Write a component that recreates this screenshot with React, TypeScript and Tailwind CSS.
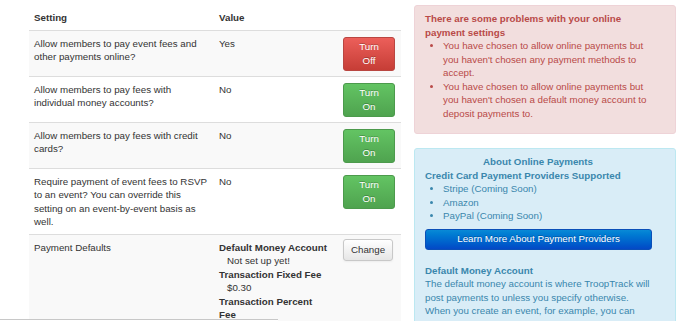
import type { ReactNode } from 'react'

interface SettingRow {
  label: string
  value: string
  on: boolean
}

const settingRows: SettingRow[] = [
  { label: 'Allow members to pay event fees and other payments online?', value: 'Yes', on: true },
  { label: 'Allow members to pay fees with individual money accounts?', value: 'No', on: false },
  { label: 'Allow members to pay fees with credit cards?', value: 'No', on: false },
  {
    label: 'Require payment of event fees to RSVP to an event? You can override this setting on an event-by-event basis as well.',
    value: 'No',
    on: false,
  },
]

const providers = ['Stripe (Coming Soon)', 'Amazon', 'PayPal (Coming Soon)']

function ToggleButton({ on }: { on: boolean }) {
  return (
    <button
      className={`w-[52px] rounded-[3px] border py-[2.5px] text-center text-[9.75px] leading-[13.5px] text-white [text-shadow:0_-1px_0_rgba(0,0,0,0.25)] ${
        on
          ? 'border-[#b94641] bg-gradient-to-b from-[#ec5f5a] to-[#c63d36]'
          : 'border-[#4c9a4c] bg-gradient-to-b from-[#63c463] to-[#4fa34f]'
      }`}
    >
      Turn
      <br />
      {on ? 'Off' : 'On'}
    </button>
  )
}

function Row({ striped, children }: { striped: boolean; children: ReactNode }) {
  return (
    <tr className={`border-t border-[#dddddd] align-top ${striped ? 'bg-[#f9f9f9]' : 'bg-white'}`}>{children}</tr>
  )
}

export default function App() {
  return (
    <div className="relative h-[321px] overflow-hidden bg-white font-['Liberation_Sans',Arial,sans-serif] text-[9.75px] leading-[13.5px] text-[#333333]">
      <div className="flex items-start pl-[29px] pt-[5px]">
        <table className="w-[372px] table-fixed border-collapse">
          <colgroup>
            <col className="w-[185px]" />
            <col className="w-[124px]" />
            <col className="w-[63px]" />
          </colgroup>
          <thead>
            <tr className="text-left">
              <th className="px-[5px] pb-[5px] pt-[6px] font-bold">Setting</th>
              <th className="px-[5px] pb-[5px] pt-[6px] font-bold">Value</th>
              <th className="px-[5px] pb-[5px] pt-[6px]" />
            </tr>
          </thead>
          <tbody>
            {settingRows.map((row, i) => (
              <Row key={row.label} striped={i % 2 === 0}>
                <td className="px-[5px] pb-[5px] pt-[6px]">{row.label}</td>
                <td className="px-[5px] pb-[5px] pt-[6px]">{row.value}</td>
                <td className="px-[5px] pb-[5px] pt-[6px]">
                  <ToggleButton on={row.on} />
                </td>
              </Row>
            ))}
            <Row striped>
              <td className="px-[5px] pb-[5px] pt-[6px]">Payment Defaults</td>
              <td className="px-[5px] pb-[5px] pt-[6px]">
                <div className="font-bold">Default Money Account</div>
                <div className="pl-[8px]">Not set up yet!</div>
                <div className="font-bold">Transaction Fixed Fee</div>
                <div className="pl-[8px]">$0.30</div>
                <div className="pr-[10px] font-bold">Transaction Percent Fee</div>
                <div className="pl-[8px]">2.9%</div>
              </td>
              <td className="px-[5px] pb-[5px] pt-[4px]">
                <button className="h-[22px] w-[50px] rounded-[3px] border border-[#c8c8c8] bg-gradient-to-b from-white to-[#e6e6e6] text-[9.75px] text-[#333333] shadow-[inset_0_1px_0_rgba(255,255,255,0.2),0_1px_2px_rgba(0,0,0,0.05)]">
                  Change
                </button>
              </td>
            </Row>
          </tbody>
        </table>

        <div className="ml-[13px] flex w-[262px] flex-col gap-[14px]">
          <div className="rounded-[3px] border border-[#eed3d7] bg-[#f2dede] pb-[13px] pl-[10px] pr-[26px] pt-[6px] text-[#b94a48]">
            <div className="font-bold">There are some problems with your online payment settings</div>
            <ul className="list-disc pl-[18px]">
              <li>
                You have chosen to allow online payments but you haven't chosen any payment methods to accept.
              </li>
              <li>
                You have chosen to allow online payments but you haven't chosen a default money account to deposit
                payments to.
              </li>
            </ul>
          </div>

          <div className="rounded-[3px] border border-[#bce8f1] bg-[#d9edf7] pb-[10px] pl-[10px] pr-[24px] pt-[6px] text-[#3a87ad]">
            <div className="text-center font-bold">About Online Payments</div>
            <div className="font-bold">Credit Card Payment Providers Supported</div>
            <ul className="list-disc pl-[18px]">
              {providers.map((p) => (
                <li key={p}>{p}</li>
              ))}
            </ul>
            <button className="mt-[6px] h-[21px] w-[227px] rounded-[3px] border border-[#0a4fb8] bg-gradient-to-b from-[#0a8ad6] to-[#0548c6] text-[9.75px] text-white [text-shadow:0_-1px_0_rgba(0,0,0,0.25)]">
              Learn More About Payment Providers
            </button>
            <div className="mt-[14px] font-bold">Default Money Account</div>
            <p>
              The default money account is where TroopTrack will post payments to unless you specify otherwise. When
              you create an event, for example, you can choose a different account for its payments.
            </p>
          </div>
        </div>
      </div>
      <div className="absolute bottom-0 left-0 h-[2px] w-[278px] border-t border-[#c8c8c8] bg-white" />
    </div>
  )
}
